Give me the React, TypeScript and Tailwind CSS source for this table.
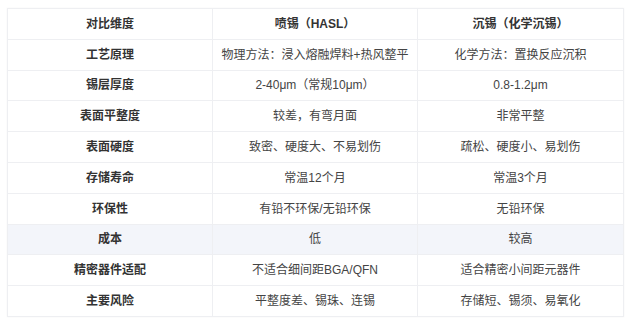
const rows: [string, string, string][] = [
  ['工艺原理', '物理方法：浸入熔融焊料+热风整平', '化学方法：置换反应沉积'],
  ['锡层厚度', '2-40μm（常规10μm）', '0.8-1.2μm'],
  ['表面平整度', '较差，有弯月面', '非常平整'],
  ['表面硬度', '致密、硬度大、不易划伤', '疏松、硬度小、易划伤'],
  ['存储寿命', '常温12个月', '常温3个月'],
  ['环保性', '有铅不环保/无铅环保', '无铅环保'],
  ['成本', '低', '较高'],
  ['精密器件适配', '不适合细间距BGA/QFN', '适合精密小间距元器件'],
  ['主要风险', '平整度差、锡珠、连锡', '存储短、锡须、易氧化'],
];

const Cell = (props: { children: string; bold?: boolean; last?: boolean }) => (
  <div
    className={`flex items-center justify-center h-[30.8px] border-b border-[#eeeff2] ${
      props.last ? '' : 'border-r'
    } ${props.bold ? 'font-bold text-[#333]' : 'text-[#444]'}`}
  >
    {props.children}
  </div>
);

export default function App() {
  return (
    <div className="w-[630px] h-[321px] bg-white pt-2 pl-[7px]">
      <div
        className="w-[617px] border-t border-l border-r border-[#eeeff2] text-[12px] shadow-[0_0_2px_rgba(0,0,0,0.04)]"
        style={{ fontFamily: '"Liberation Sans", "Noto Sans CJK SC", sans-serif' }}
      >
        <div className="grid grid-cols-3">
          <Cell bold>对比维度</Cell>
          <Cell bold>喷锡（HASL）</Cell>
          <Cell bold last>
            沉锡（化学沉锡）
          </Cell>
        </div>
        {rows.map((r, i) => (
          <div key={r[0]} className={`grid grid-cols-3 ${i === 6 ? 'bg-[#f3f5fa]' : ''}`}>
            <Cell bold>{r[0]}</Cell>
            <Cell>{r[1]}</Cell>
            <Cell last>{r[2]}</Cell>
          </div>
        ))}
      </div>
    </div>
  );
}
